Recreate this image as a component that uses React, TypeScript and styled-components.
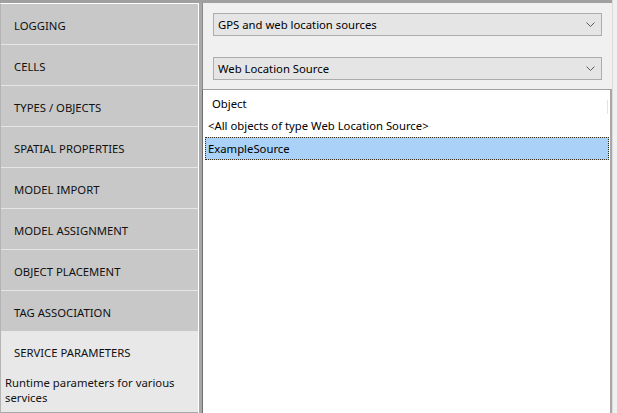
import React from "react";
import styled, { createGlobalStyle } from "styled-components";

const Global = createGlobalStyle`
  html, body { margin: 0; padding: 0; background: #f0f0f0; }
  body { font-family: "Noto Sans", "Open Sans", sans-serif; font-size: 11.3px; color: #000; }
  * { box-sizing: border-box; }
`;

const Window = styled.div`
  display: flex;
  width: 617px;
  height: 413px;
  overflow: hidden;
  background: #f0f0f0;
`;

const Frame = styled.div`
  display: flex;
  width: 612px;
  height: 100%;
  border-top: 3px solid #a0a0a0;
`;

const EdgeStrip = styled.div`
  flex: 1;
  background: #f0f0f0;
  border-left: 1px solid #dcdcdc;
`;

const Sidebar = styled.nav`
  display: flex;
  flex-direction: column;
  width: 199px;
  height: 100%;
  background: #c8c8c8;
  border-top: 1px solid #ffffff;
  border-left: 1px solid #b4b4b4;
  border-right: 1px solid #ffffff;
`;

const NavItem = styled.div<{ $active?: boolean }>`
  flex: ${(p) => (p.$active ? 1 : "none")};
  height: ${(p) => (p.$active ? "auto" : "41px")};
  padding: ${(p) => (p.$active ? "12px 0 0 0" : "3px 0 0 13px")};
  display: flex;
  flex-direction: column;
  justify-content: ${(p) => (p.$active ? "flex-start" : "center")};
  background: ${(p) => (p.$active ? "#e8e8e8" : "#c8c8c8")};
  border-bottom: 1px solid ${(p) => (p.$active ? "#a8a8a8" : "#e6e6e6")};
  color: #111;
  font-size: 11.3px;
  white-space: nowrap;
`;

const NavTitle = styled.div`
  padding-left: 13px;
  line-height: 18px;
`;

const NavDesc = styled.div`
  margin-top: 13px;
  padding-left: 4px;
  padding-right: 20px;
  line-height: 15px;
  white-space: normal;
  color: #111;
`;

const Splitter = styled.div`
  width: 4px;
  height: 100%;
  background: #a8a8a8;
  border-right: 1px solid #8a8a8a;
`;

const Main = styled.main`
  flex: 1;
  display: flex;
  flex-direction: column;
  min-width: 0;
  background: #f0f0f0;
`;

const Combo = styled.div<{ $first?: boolean }>`
  display: flex;
  align-items: center;
  justify-content: space-between;
  height: 23px;
  margin: ${(p) => (p.$first ? "10px 10px 0 10px" : "21px 10px 0 10px")};
  padding: 0 6px 1px 4px;
  background: #e5e5e5;
  border: 1px solid #adadad;
  font-size: 11.3px;
  color: #000;
`;

const Chevron = () => (
  <svg width="9" height="5" viewBox="0 0 9 5" fill="none">
    <path d="M0.5 0.5 L4.5 4.5 L8.5 0.5" stroke="#5a5a5a" strokeWidth="1" />
  </svg>
);

const ListBox = styled.div`
  flex: 1;
  margin-top: 9px;
  margin-left: -1px;
  background: #fff;
  border: 1px solid #a0a0a0;
  border-left-color: #6e6e6e;
  border-right: 2px solid #a8a8a8;
  border-bottom: none;
  display: flex;
  flex-direction: column;
`;

const HeaderRow = styled.div`
  position: relative;
  height: 24px;
  padding: 2px 0 0 9px;
  display: flex;
  align-items: center;
  font-size: 11.3px;
  &::after {
    content: "";
    position: absolute;
    right: 2px;
    top: 10px;
    bottom: 0;
    width: 1px;
    background: #e3e3e3;
  }
`;

const Row = styled.div<{ $selected?: boolean }>`
  height: 23px;
  display: flex;
  align-items: center;
  margin: ${(p) => (p.$selected ? "0 1px 0 2px" : "0")};
  padding: ${(p) => (p.$selected ? "0 0 1px 2px" : "0 0 1px 5px")};
  background: ${(p) => (p.$selected ? "#aad1f7" : "transparent")};
  border: ${(p) => (p.$selected ? "1px dotted #3a3020" : "none")};
  font-size: 11.3px;
  white-space: nowrap;
`;

const items = [
  "LOGGING",
  "CELLS",
  "TYPES / OBJECTS",
  "SPATIAL PROPERTIES",
  "MODEL IMPORT",
  "MODEL ASSIGNMENT",
  "OBJECT PLACEMENT",
  "TAG ASSOCIATION",
];

export default function App() {
  return (
    <>
      <Global />
      <Window>
        <Frame>
          <Sidebar>
            {items.map((t) => (
              <NavItem key={t}>{t}</NavItem>
            ))}
            <NavItem $active>
              <NavTitle>SERVICE PARAMETERS</NavTitle>
              <NavDesc>Runtime parameters for various services</NavDesc>
            </NavItem>
          </Sidebar>
          <Splitter />
          <Main>
            <Combo $first>
              <span>GPS and web location sources</span>
              <Chevron />
            </Combo>
            <Combo>
              <span>Web Location Source</span>
              <Chevron />
            </Combo>
            <ListBox>
              <HeaderRow>Object</HeaderRow>
              <Row>&lt;All objects of type Web Location Source&gt;</Row>
              <Row $selected>ExampleSource</Row>
            </ListBox>
          </Main>
        </Frame>
        <EdgeStrip />
      </Window>
    </>
  );
}
